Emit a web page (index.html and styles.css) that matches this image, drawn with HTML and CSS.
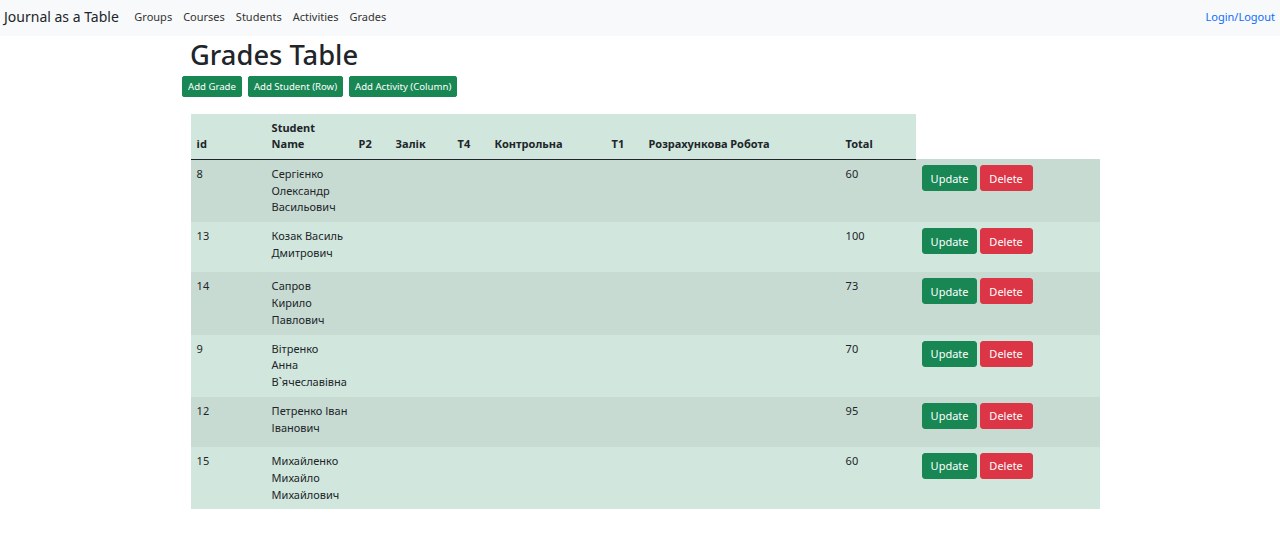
FILE: index.html
```html
<!DOCTYPE html>
<html lang="uk">
<head>
<meta charset="utf-8">
<title>Grades Table</title>
<link rel="stylesheet" href="styles.css">
</head>
<body>
<nav class="navbar">
  <div class="nav-left">
    <a class="brand" href="#">Journal as a Table</a>
    <a class="nav-link" href="#">Groups</a>
    <a class="nav-link" href="#">Courses</a>
    <a class="nav-link" href="#">Students</a>
    <a class="nav-link" href="#">Activities</a>
    <a class="nav-link" href="#">Grades</a>
  </div>
  <a class="login" href="#">Login/Logout</a>
</nav>
<main class="container">
  <h1 class="title">Grades Table</h1>
  <div class="toolbar">
    <button class="btn-sm">Add Grade</button>
    <button class="btn-sm">Add Student (Row)</button>
    <button class="btn-sm">Add Activity (Column)</button>
  </div>
  <table class="grades">
    <colgroup>
      <col class="c-id"><col class="c-name"><col class="c-p2"><col class="c-zal"><col class="c-t4"><col class="c-kon"><col class="c-t1"><col class="c-roz"><col class="c-tot"><col class="c-act">
    </colgroup>
    <thead>
      <tr>
        <th>id</th><th>Student Name</th><th>P2</th><th>Залік</th><th>T4</th><th>Контрольна</th><th>T1</th><th>Розрахункова Робота</th><th>Total</th>
      </tr>
    </thead>
    <tbody>
      <tr class="odd"><td>8</td><td>Сергієнко Олександр Васильович</td><td></td><td></td><td></td><td></td><td></td><td></td><td>60</td><td><div class="actions"><button class="btn btn-up">Update</button><button class="btn btn-del">Delete</button></div></td></tr>
      <tr><td>13</td><td>Козак Василь Дмитрович</td><td></td><td></td><td></td><td></td><td></td><td></td><td>100</td><td><div class="actions"><button class="btn btn-up">Update</button><button class="btn btn-del">Delete</button></div></td></tr>
      <tr class="odd"><td>14</td><td>Сапров Кирило Павлович</td><td></td><td></td><td></td><td></td><td></td><td></td><td>73</td><td><div class="actions"><button class="btn btn-up">Update</button><button class="btn btn-del">Delete</button></div></td></tr>
      <tr><td>9</td><td>Вітренко<br>Анна В`ячеславівна</td><td></td><td></td><td></td><td></td><td></td><td></td><td>70</td><td><div class="actions"><button class="btn btn-up">Update</button><button class="btn btn-del">Delete</button></div></td></tr>
      <tr class="odd"><td>12</td><td><span class="nowrap">Петренко Іван</span> Іванович</td><td></td><td></td><td></td><td></td><td></td><td></td><td>95</td><td><div class="actions"><button class="btn btn-up">Update</button><button class="btn btn-del">Delete</button></div></td></tr>
      <tr><td>15</td><td>Михайленко Михайло Михайлович</td><td></td><td></td><td></td><td></td><td></td><td></td><td>60</td><td><div class="actions"><button class="btn btn-up">Update</button><button class="btn btn-del">Delete</button></div></td></tr>
    </tbody>
  </table>
</main>
</body>
</html>
```
FILE: styles.css
```css
* { box-sizing: border-box; }
body {
  margin: 0;
  font-family: "Noto Sans", "Open Sans", sans-serif;
  color: #212529;
  background: #fff;
}
.navbar {
  height: 36px;
  background: #f8f9fa;
  display: flex;
  align-items: center;
  justify-content: space-between;
  padding: 0 5px 4px 4px;
}
.nav-left { display: flex; align-items: center; }
.brand {
  font-size: 14px;
  color: #212529;
  text-decoration: none;
  margin-right: 10px;
}
.nav-link {
  font-size: 11px;
  color: #333;
  text-decoration: none;
  padding: 0 5.5px;
}
.login {
  font-size: 11px;
  color: #0d6efd;
  text-decoration: none;
}
.container {
  width: 918px;
  margin-left: 182px;
}
.title {
  font-size: 27.3px;
  font-weight: 500;
  margin: 1px 0 0 8px;
  line-height: 36px;
}
.toolbar {
  display: flex;
  gap: 6px;
  margin-top: 3px;
}
.btn-sm {
  height: 21px;
  padding: 0 5px;
  font-family: inherit;
  font-size: 9.6px;
  color: #fff;
  background: #198754;
  border: 1px solid #198754;
  border-radius: 2px;
}
.grades {
  margin: 17px 0 0 9px;
  width: 909px;
  border-collapse: collapse;
  table-layout: fixed;
  font-size: 11px;
  line-height: 16.8px;
}
.c-id { width: 75px; }
.c-name { width: 87px; }
.c-p2 { width: 37px; }
.c-zal { width: 62px; }
.c-t4 { width: 37px; }
.c-kon { width: 117px; }
.c-t1 { width: 37px; }
.c-roz { width: 197px; }
.c-tot { width: 76px; }
.c-act { width: 184px; }
.grades th {
  background: #d1e7dd;
  text-align: left;
  vertical-align: bottom;
  font-weight: 700;
  padding: 5.6px;
  border-bottom: 1px solid #212529;
}
.grades td {
  background: #d1e7dd;
  vertical-align: top;
  padding: 6px 5.6px;
}
.grades tr.odd td { background: #c7dbd2; }
.nowrap { white-space: nowrap; }
.actions {
  display: flex;
  gap: 3px;
  height: 38px;
  align-items: flex-start;
}
.btn {
  height: 26px;
  padding: 0 8px;
  font-family: inherit;
  font-size: 11px;
  color: #fff;
  border-radius: 3px;
  border: 1px solid transparent;
}
.btn-up { background: #198754; border-color: #198754; width: 55px; }
.btn-del { background: #dc3545; border-color: #dc3545; width: 53px; }
```
